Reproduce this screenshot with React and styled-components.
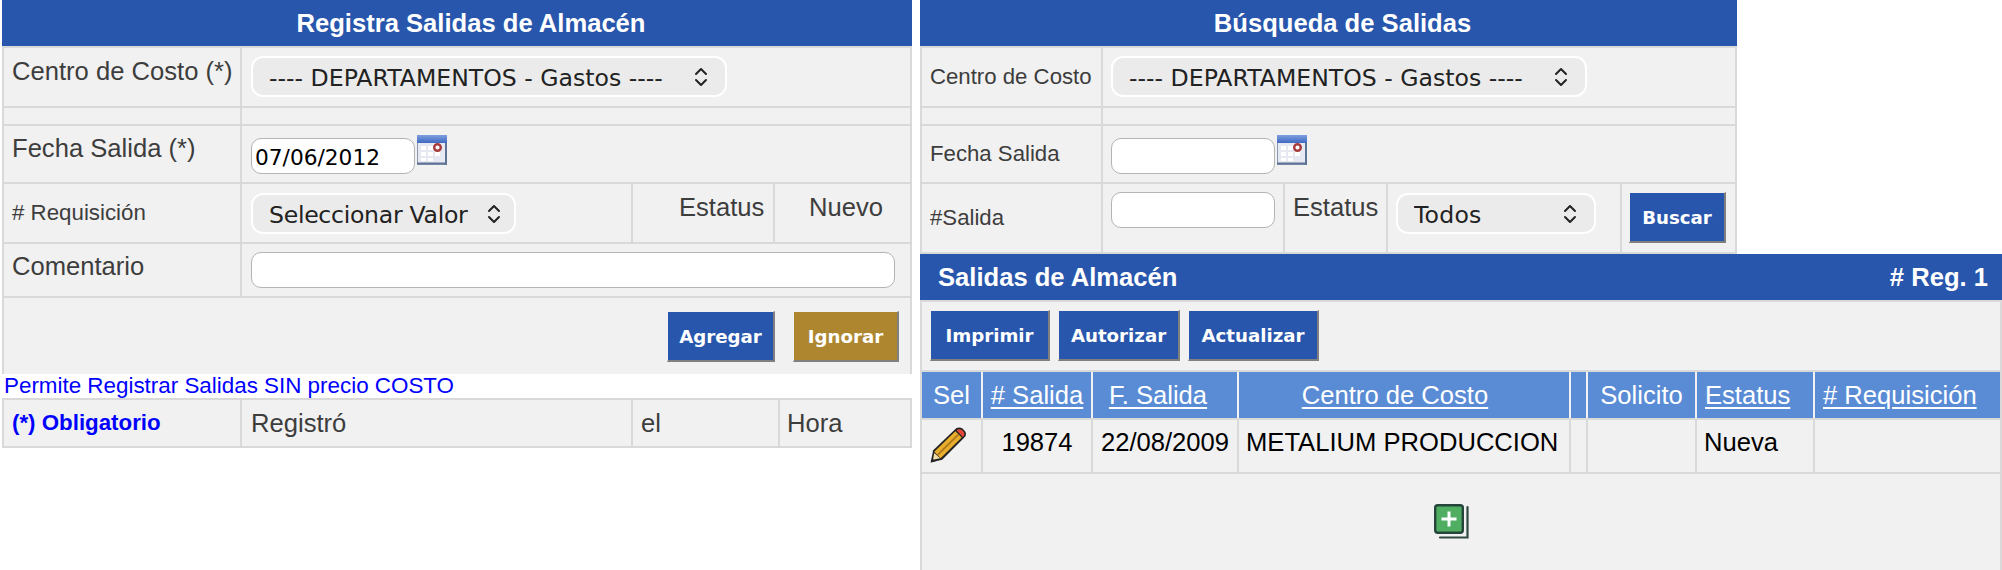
import React from "react";
import styled, { createGlobalStyle } from "styled-components";

const GlobalStyle = createGlobalStyle`
  body {
    margin: 0;
    background: #fff;
    font-family: "Liberation Sans", Arial, sans-serif;
    color: #3d3d3d;
  }
`;

const Page = styled.div`
  display: flex;
  align-items: flex-start;
  gap: 8px;
  width: 2002px;
  height: 570px;
  padding-left: 2px;
  box-sizing: border-box;
  overflow: hidden;
`;

const LeftColumn = styled.div`
  width: 910px;
  flex: none;
`;

const RightColumn = styled.div`
  width: 1082px;
  flex: none;
  height: 570px;
  display: flex;
  flex-direction: column;
`;

const SearchPanel = styled.div`
  width: 817px;
`;

const TitleBar = styled.div`
  height: 46px;
  background: #2756ac;
  color: #fff;
  font-size: 25.6px;
  font-weight: 700;
  line-height: 46px;
  text-align: center;
  padding-left: 28px;
`;

const ListBar = styled.div`
  height: 46px;
  flex: none;
  background: #2756ac;
  color: #fff;
  font-size: 25.6px;
  font-weight: 700;
  line-height: 46px;
  display: flex;
  justify-content: space-between;
  padding: 0 14px 0 18px;
`;

const Grid = styled.div`
  background: #f1f1f1;
  border: solid #d9d9d9;
  border-width: ${(p) => (p.$open ? "0 2px" : "0 2px 2px")};
`;

const Row = styled.div`
  display: flex;
  height: ${(p) => p.$h}px;
  border-top: 2px solid #d9d9d9;
  box-sizing: border-box;
`;

const Cell = styled.div`
  flex: ${(p) => (p.$w ? `0 0 ${p.$w}px` : "1 1 0")};
  min-width: 0;
  box-sizing: border-box;
  display: flex;
  align-items: ${(p) => (p.$pt !== undefined ? "flex-start" : "center")};
  padding: ${(p) => p.$pt ?? 0}px 8px 0 ${(p) => p.$pl ?? 8}px;
  & + & {
    border-left: 2px solid #d9d9d9;
  }
`;

const Label = styled.span`
  font-size: ${(p) => p.$size ?? 25.6}px;
  line-height: 30px;
  white-space: nowrap;
`;

const Required = styled(Label)`
  color: #0000ff;
  font-weight: 700;
`;

const Notice = styled.div`
  height: 24px;
  padding-left: 2px;
  color: #0000ff;
  font-size: 22.4px;
  line-height: 24px;
  white-space: nowrap;
`;

const SelectBox = styled.div`
  position: relative;
  width: ${(p) => p.$w}px;
  height: ${(p) => p.$h}px;
  flex: none;
`;

const Select = styled.select`
  appearance: none;
  display: block;
  width: 100%;
  height: 100%;
  box-sizing: border-box;
  border: 2px solid #fff;
  border-radius: 12px;
  background: #ebebeb;
  color: #222;
  font-family: "DejaVu Sans", Verdana, sans-serif;
  font-size: 23.6px;
  letter-spacing: ${(p) => p.$ls ?? 0}px;
  padding: 2px 0 0 16px;
  outline: none;
`;

const Arrows = styled.svg`
  position: absolute;
  right: ${(p) => p.$right ?? 18}px;
  top: 50%;
  transform: translateY(-50%);
  pointer-events: none;
`;

const Input = styled.input`
  width: ${(p) => p.$w}px;
  height: 36px;
  flex: none;
  box-sizing: border-box;
  background: #fff;
  border: 1px solid #b4b4b4;
  border-radius: 10px;
  color: #000;
  font-family: "DejaVu Sans", Verdana, sans-serif;
  font-size: 21.7px;
  padding: 3px 0 0 3px;
  outline: none;
`;

const DateField = styled.div`
  display: flex;
  align-items: flex-start;
  gap: 2px;
`;

const CalendarIcon = styled.svg`
  margin-top: -3px;
  flex: none;
`;

const Actions = styled.div`
  display: flex;
  justify-content: flex-end;
  width: 100%;
  gap: 18px;
  padding: 13px 3px 0 0;
`;

const Toolbar = styled.div`
  display: flex;
  gap: 8px;
  padding: 8px 0 0 8px;
`;

const Button = styled.button`
  width: ${(p) => p.$w}px;
  height: 51px;
  padding: 0;
  flex: none;
  box-sizing: border-box;
  background: ${(p) => (p.$gold ? "#ae8630" : "#2756ac")};
  color: #fff;
  font-family: "DejaVu Sans", Verdana, sans-serif;
  font-size: 18.2px;
  font-weight: 700;
  border-style: solid;
  border-width: 1px 2px 2px 1px;
  border-color: #f1f1f1 #7f7f80 #7f7f80 #f1f1f1;
`;

const ListGrid = styled(Grid)`
  flex: 1;
`;

const HeadRow = styled.div`
  display: flex;
  height: 50px;
  border-top: 2px solid #d9d9d9;
  border-bottom: 2px solid #d9d9d9;
  box-sizing: border-box;
`;

const HeadCell = styled.div`
  flex: 0 0 ${(p) => p.$w}px;
  box-sizing: border-box;
  background: #5a8cd6;
  color: #fff;
  font-size: 25.6px;
  line-height: 46px;
  white-space: nowrap;
  text-align: ${(p) => (p.$left ? "left" : "center")};
  padding: 0 ${(p) => p.$pr ?? 0}px 0 ${(p) => (p.$left ? 8 : 0)}px;
  & + & {
    margin-left: 2px;
  }
`;

const SortLink = styled.a`
  color: #fff;
  text-decoration: underline;
  text-decoration-thickness: 2px;
  text-underline-offset: 3px;
`;

const DataRow = styled.div`
  display: flex;
  height: 54px;
  border-bottom: 2px solid #d9d9d9;
  box-sizing: border-box;
`;

const DataCell = styled.div`
  flex: 0 0 ${(p) => p.$w}px;
  box-sizing: border-box;
  color: #000;
  font-size: 25.6px;
  line-height: 44px;
  white-space: nowrap;
  display: flex;
  justify-content: ${(p) => (p.$left ? "flex-start" : "center")};
  padding-left: ${(p) => (p.$left ? 7 : 0)}px;
  & + & {
    border-left: 2px solid #d9d9d9;
  }
`;

const PencilWrap = styled.svg`
  margin-top: 6px;
  margin-left: -8px;
`;

const AddRow = styled.div`
  display: flex;
  padding: 30px 0 0 512px;
`;

const Chevrons = ({ right }) => (
  <Arrows $right={right} width="16" height="24" viewBox="0 0 16 24" fill="none" stroke="#222" strokeWidth="2" strokeLinecap="round" strokeLinejoin="round">
    <path d="M3 9 L8 4 L13 9" />
    <path d="M3 15 L8 20 L13 15" />
  </Arrows>
);

const DropDown = ({ w, h, value, ls, arrowRight }) => (
  <SelectBox $w={w} $h={h}>
    <Select defaultValue={value} $ls={ls}>
      <option>{value}</option>
    </Select>
    <Chevrons right={arrowRight} />
  </SelectBox>
);

const Calendar = () => (
  <CalendarIcon width="30" height="30" viewBox="0 0 30 30">
    <defs>
      <linearGradient id="calTop" x1="0" y1="0" x2="0" y2="1">
        <stop offset="0" stopColor="#7f9fe0" />
        <stop offset="1" stopColor="#3f69c0" />
      </linearGradient>
    </defs>
    <rect x="0.5" y="0.5" width="29" height="29" fill="#e6e9f2" stroke="#8c9ab8" />
    <rect x="0" y="0" width="30" height="8" fill="url(#calTop)" />
    <g fill="#fff">
      <rect x="4" y="11" width="5" height="4" />
      <rect x="11" y="11" width="5" height="4" />
      <rect x="4" y="17" width="5" height="4" />
      <rect x="11" y="17" width="5" height="4" />
      <rect x="18" y="17" width="5" height="4" />
      <rect x="4" y="23" width="5" height="3" />
      <rect x="11" y="23" width="5" height="3" />
    </g>
    <circle cx="20.5" cy="12.5" r="3.3" fill="#fff" stroke="#a83a3a" strokeWidth="2.4" />
    <path d="M0 28.5 H30 M29 8 V30" stroke="#5f7396" strokeWidth="2" />
  </CalendarIcon>
);

const Pencil = () => (
  <PencilWrap width="38" height="38" viewBox="0 0 36 36">
    <path d="M1.5 34.5 L4 23 L26 2 Q29 0.5 32 2.5 L34.5 5.5 Q36 8.5 33.5 11 L12.5 32 Z" fill="#222" />
    <path d="M5 24.5 L25 5 L31 11 L11 30.5 Z" fill="#e9ad2c" />
    <path d="M8 27.5 L28 8" stroke="#a9761a" strokeWidth="1.6" />
    <path d="M3.8 32 L5 25.5 L10.5 30.5 Z" fill="#f1dfa6" />
    <path d="M2 34.5 L3 30.5 L6 33.5 Z" fill="#222" />
    <path d="M26 4 Q29 2 31.5 4 L33 6 Q34.5 8.5 32 10.5 Z" fill="#e2473c" />
  </PencilWrap>
);

const AddIcon = () => (
  <svg width="36" height="36" viewBox="0 0 36 36">
    <path d="M33.5 3 V33.5 H6" fill="none" stroke="#2f4a3e" strokeWidth="2.2" strokeLinecap="round" />
    <rect x="1.2" y="1.2" width="27.6" height="27.6" rx="2.5" fill="#4fae62" stroke="#25453a" strokeWidth="2.4" />
    <path d="M15 7.5 V22.5 M7.5 15 H22.5" stroke="#fff" strokeWidth="3" />
  </svg>
);

const COL = [59, 108, 144, 330, 15, 107, 116, 185];

export default function App() {
  return (
    <Page>
      <GlobalStyle />
      <LeftColumn>
        <TitleBar>Registra Salidas de Almacén</TitleBar>
        <Grid $open>
          <Row $h={60}>
            <Cell $w={236} $pt={8}><Label>Centro de Costo (*)</Label></Cell>
            <Cell $pt={8} $pl={9}>
              <DropDown w={476} h={41} value="---- DEPARTAMENTOS - Gastos ----" />
            </Cell>
          </Row>
          <Row $h={18}>
            <Cell $w={236} />
            <Cell />
          </Row>
          <Row $h={58}>
            <Cell $w={236} $pt={7}><Label>Fecha Salida (*)</Label></Cell>
            <Cell $pt={12} $pl={9}>
              <DateField>
                <Input $w={164} defaultValue="07/06/2012" />
                <Calendar />
              </DateField>
            </Cell>
          </Row>
          <Row $h={60}>
            <Cell $w={236}><Label $size={22.3}># Requisición</Label></Cell>
            <Cell $w={391} $pt={9} $pl={9}>
              <DropDown w={265} h={41} value="Seleccionar Valor" ls={-0.3} arrowRight={14} />
            </Cell>
            <Cell $w={142} $pt={8} $pl={46}><Label>Estatus</Label></Cell>
            <Cell $pt={8} $pl={34}><Label>Nuevo</Label></Cell>
          </Row>
          <Row $h={54}>
            <Cell $w={236} $pt={7}><Label>Comentario</Label></Cell>
            <Cell $pt={8} $pl={9}>
              <Input $w={644} />
            </Cell>
          </Row>
          <Row $h={78}>
            <Cell $pl={0} $pt={0}>
              <Actions>
                <Button $w={108}>Agregar</Button>
                <Button $w={106} $gold>Ignorar</Button>
              </Actions>
            </Cell>
          </Row>
        </Grid>
        <Notice>Permite Registrar Salidas SIN precio COSTO</Notice>
        <Grid>
          <Row $h={48}>
            <Cell $w={236}><Required $size={22.3}>(*) Obligatorio</Required></Cell>
            <Cell $w={391} $pl={9}><Label>Registró</Label></Cell>
            <Cell $w={147}><Label>el</Label></Cell>
            <Cell $pl={7}><Label>Hora</Label></Cell>
          </Row>
        </Grid>
      </LeftColumn>

      <RightColumn>
        <SearchPanel>
          <TitleBar>Búsqueda de Salidas</TitleBar>
          <Grid>
            <Row $h={60}>
              <Cell $w={179}><Label $size={22.2}>Centro de Costo</Label></Cell>
              <Cell $pt={8} $pl={8}>
                <DropDown w={476} h={41} value="---- DEPARTAMENTOS - Gastos ----" />
              </Cell>
            </Row>
            <Row $h={18}>
              <Cell $w={179} />
              <Cell />
            </Row>
            <Row $h={58}>
              <Cell $w={179}><Label $size={22.2}>Fecha Salida</Label></Cell>
              <Cell $pt={12} $pl={8}>
                <DateField>
                  <Input $w={164} />
                  <Calendar />
                </DateField>
              </Cell>
            </Row>
            <Row $h={70}>
              <Cell $w={179}><Label $size={22.2}>#Salida</Label></Cell>
              <Cell $w={182} $pt={8} $pl={8}><Input $w={164} /></Cell>
              <Cell $w={103} $pt={8}><Label>Estatus</Label></Cell>
              <Cell $w={234} $pt={9} $pl={8}>
                <DropDown w={200} h={41} value="Todos" ls={0.2} />
              </Cell>
              <Cell $pt={8} $pl={7}><Button $w={97}>Buscar</Button></Cell>
            </Row>
          </Grid>
        </SearchPanel>

        <ListBar>
          <span>Salidas de Almacén</span>
          <span># Reg. 1</span>
        </ListBar>
        <ListGrid $open>
          <Row $h={70}>
            <Toolbar>
              <Button $w={120}>Imprimir</Button>
              <Button $w={122}>Autorizar</Button>
              <Button $w={131}>Actualizar</Button>
            </Toolbar>
          </Row>
          <HeadRow>
            <HeadCell $w={COL[0]}>Sel</HeadCell>
            <HeadCell $w={COL[1]}><SortLink># Salida</SortLink></HeadCell>
            <HeadCell $w={COL[2]} $pr={14}><SortLink>F. Salida</SortLink></HeadCell>
            <HeadCell $w={COL[3]} $pr={18}><SortLink>Centro de Costo</SortLink></HeadCell>
            <HeadCell $w={COL[4]} />
            <HeadCell $w={COL[5]}>Solicito</HeadCell>
            <HeadCell $w={COL[6]} $left><SortLink>Estatus</SortLink></HeadCell>
            <HeadCell $w={COL[7]} $left><SortLink># Requisición</SortLink></HeadCell>
          </HeadRow>
          <DataRow>
            <DataCell $w={COL[0]}><Pencil /></DataCell>
            <DataCell $w={COL[1] + 2}>19874</DataCell>
            <DataCell $w={COL[2] + 2}>22/08/2009</DataCell>
            <DataCell $w={COL[3] + 2} $left>METALIUM PRODUCCION</DataCell>
            <DataCell $w={COL[4] + 2} />
            <DataCell $w={COL[5] + 2} />
            <DataCell $w={COL[6] + 2} $left>Nueva</DataCell>
            <DataCell $w={COL[7] + 2} />
          </DataRow>
          <AddRow><AddIcon /></AddRow>
        </ListGrid>
      </RightColumn>
    </Page>
  );
}
